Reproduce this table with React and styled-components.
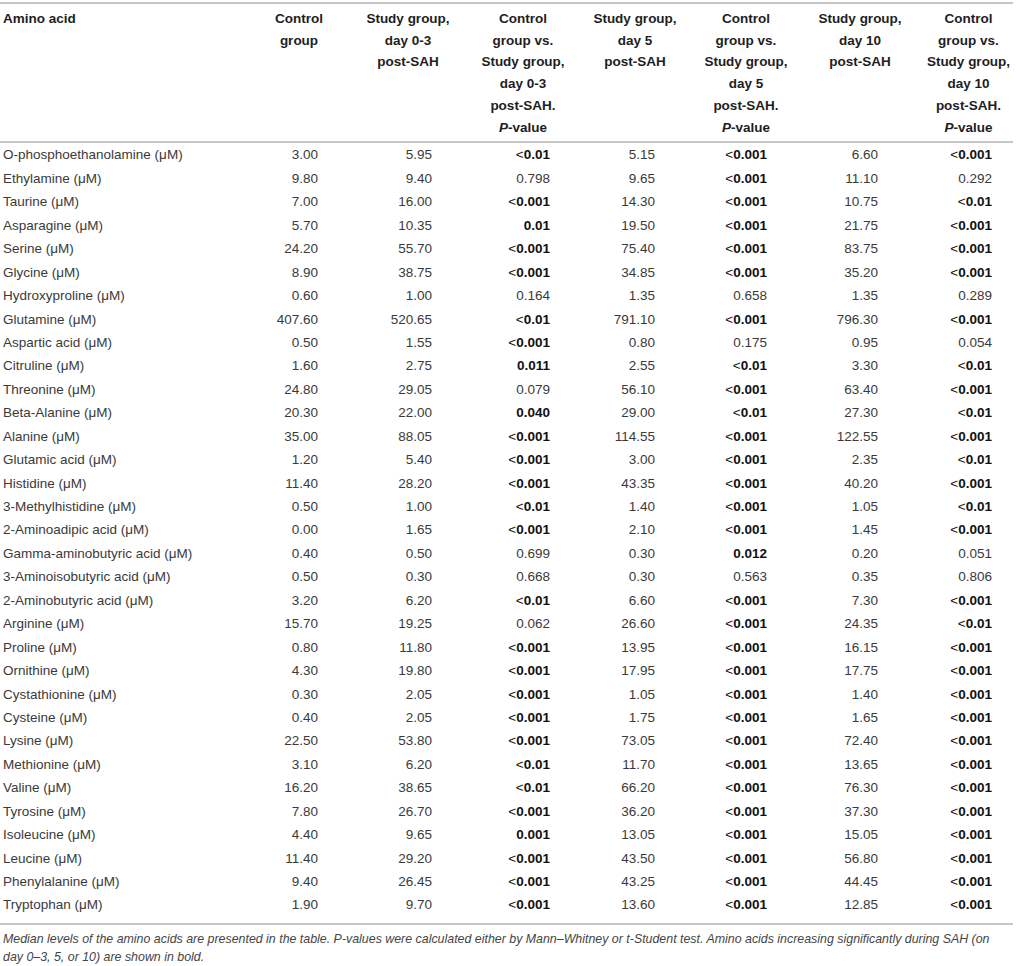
import React from "react";
import styled, { createGlobalStyle } from "styled-components";

const GlobalStyle = createGlobalStyle`
  html, body { margin: 0; padding: 0; background: #fff; }
  body { font-family: "Liberation Sans", Arial, sans-serif; }
`;

const COLS = "244px 110px 108px 122px 102px 120px 108px 99px";
const PAD_RIGHT = [0, 36, 30, 34, 31, 39, 36, 21];
const HEAD_SHIFT = [0, 0, 0, 0, 0, 0, 0, 10];

const Wrap = styled.div`
  width: 1013px;
  padding-top: 2px;
`;

const Table = styled.div`
  border-top: 2px solid #c6c6c6;
  border-bottom: 2px solid #c6c6c6;
`;

const HeadRow = styled.div`
  display: grid;
  grid-template-columns: ${COLS};
  border-bottom: 2px solid #c6c6c6;
  padding: 4px 0 3px;
  font-size: 13.5px;
  font-weight: bold;
  line-height: 21.7px;
  color: #1e1e1e;
`;

const HeadCell = styled.div`
  text-align: ${(p) => (p.$first ? "left" : "center")};
  padding-left: ${(p) => (p.$first ? 3 : p.$shift)}px;
`;

const Body = styled.div`
  padding: 0 0 6px;
`;

const Row = styled.div`
  display: grid;
  grid-template-columns: ${COLS};
  height: 23.44px;
  align-items: center;
  font-size: 13.5px;
  color: #3a3a3a;
`;

const NameCell = styled.div`
  padding-left: 3px;
  white-space: nowrap;
`;

const NumCell = styled.div`
  text-align: right;
  padding-right: ${(p) => p.$pad}px;
  white-space: nowrap;
  font-weight: ${(p) => (p.$bold ? "bold" : "normal")};
  color: ${(p) => (p.$bold ? "#111" : "#3a3a3a")};
`;

const Lt = styled.span`
  font-weight: normal;
`;

const Note = styled.p`
  margin: 0;
  padding: 5px 3px 0;
  font-size: 12.4px;
  line-height: 18px;
  font-style: italic;
  color: #454545;
`;

const headers = [
  ["Amino acid"],
  ["Control", "group"],
  ["Study group,", "day 0-3", "post-SAH"],
  ["Control", "group vs.", "Study group,", "day 0-3", "post-SAH.", "P"],
  ["Study group,", "day 5", "post-SAH"],
  ["Control", "group vs.", "Study group,", "day 5", "post-SAH.", "P"],
  ["Study group,", "day 10", "post-SAH"],
  ["Control", "group vs.", "Study group,", "day 10", "post-SAH.", "P"],
];

const data = [
  ["O-phosphoethanolamine", "3.00", "5.95", "<0.01", "5.15", "<0.001", "6.60", "<0.001"],
  ["Ethylamine", "9.80", "9.40", "0.798", "9.65", "<0.001", "11.10", "0.292"],
  ["Taurine", "7.00", "16.00", "<0.001", "14.30", "<0.001", "10.75", "<0.01"],
  ["Asparagine", "5.70", "10.35", "0.01", "19.50", "<0.001", "21.75", "<0.001"],
  ["Serine", "24.20", "55.70", "<0.001", "75.40", "<0.001", "83.75", "<0.001"],
  ["Glycine", "8.90", "38.75", "<0.001", "34.85", "<0.001", "35.20", "<0.001"],
  ["Hydroxyproline", "0.60", "1.00", "0.164", "1.35", "0.658", "1.35", "0.289"],
  ["Glutamine", "407.60", "520.65", "<0.01", "791.10", "<0.001", "796.30", "<0.001"],
  ["Aspartic acid", "0.50", "1.55", "<0.001", "0.80", "0.175", "0.95", "0.054"],
  ["Citruline", "1.60", "2.75", "0.011", "2.55", "<0.01", "3.30", "<0.01"],
  ["Threonine", "24.80", "29.05", "0.079", "56.10", "<0.001", "63.40", "<0.001"],
  ["Beta-Alanine", "20.30", "22.00", "0.040", "29.00", "<0.01", "27.30", "<0.01"],
  ["Alanine", "35.00", "88.05", "<0.001", "114.55", "<0.001", "122.55", "<0.001"],
  ["Glutamic acid", "1.20", "5.40", "<0.001", "3.00", "<0.001", "2.35", "<0.01"],
  ["Histidine", "11.40", "28.20", "<0.001", "43.35", "<0.001", "40.20", "<0.001"],
  ["3-Methylhistidine", "0.50", "1.00", "<0.01", "1.40", "<0.001", "1.05", "<0.01"],
  ["2-Aminoadipic acid", "0.00", "1.65", "<0.001", "2.10", "<0.001", "1.45", "<0.001"],
  ["Gamma-aminobutyric acid", "0.40", "0.50", "0.699", "0.30", "0.012", "0.20", "0.051"],
  ["3-Aminoisobutyric acid", "0.50", "0.30", "0.668", "0.30", "0.563", "0.35", "0.806"],
  ["2-Aminobutyric acid", "3.20", "6.20", "<0.01", "6.60", "<0.001", "7.30", "<0.001"],
  ["Arginine", "15.70", "19.25", "0.062", "26.60", "<0.001", "24.35", "<0.01"],
  ["Proline", "0.80", "11.80", "<0.001", "13.95", "<0.001", "16.15", "<0.001"],
  ["Ornithine", "4.30", "19.80", "<0.001", "17.95", "<0.001", "17.75", "<0.001"],
  ["Cystathionine", "0.30", "2.05", "<0.001", "1.05", "<0.001", "1.40", "<0.001"],
  ["Cysteine", "0.40", "2.05", "<0.001", "1.75", "<0.001", "1.65", "<0.001"],
  ["Lysine", "22.50", "53.80", "<0.001", "73.05", "<0.001", "72.40", "<0.001"],
  ["Methionine", "3.10", "6.20", "<0.01", "11.70", "<0.001", "13.65", "<0.001"],
  ["Valine", "16.20", "38.65", "<0.01", "66.20", "<0.001", "76.30", "<0.001"],
  ["Tyrosine", "7.80", "26.70", "<0.001", "36.20", "<0.001", "37.30", "<0.001"],
  ["Isoleucine", "4.40", "9.65", "0.001", "13.05", "<0.001", "15.05", "<0.001"],
  ["Leucine", "11.40", "29.20", "<0.001", "43.50", "<0.001", "56.80", "<0.001"],
  ["Phenylalanine", "9.40", "26.45", "<0.001", "43.25", "<0.001", "44.45", "<0.001"],
  ["Tryptophan", "1.90", "9.70", "<0.001", "13.60", "<0.001", "12.85", "<0.001"],
];

const isBold = (v) => v.startsWith("<") || parseFloat(v) < 0.05;

function PValue({ v }) {
  if (v.startsWith("<")) {
    return (
      <>
        <Lt>&lt;</Lt>
        {v.slice(1)}
      </>
    );
  }
  return v;
}

export default function App() {
  return (
    <Wrap>
      <GlobalStyle />
      <Table>
        <HeadRow>
          {headers.map((lines, i) => (
            <HeadCell key={i} $first={i === 0} $shift={HEAD_SHIFT[i]}>
              {lines.map((l, j) =>
                l === "P" ? (
                  <div key={j}>
                    <i>P</i>-value
                  </div>
                ) : (
                  <div key={j}>{l}</div>
                )
              )}
            </HeadCell>
          ))}
        </HeadRow>
        <Body>
          {data.map((r) => (
            <Row key={r[0]}>
              <NameCell>{r[0]} (μM)</NameCell>
              {r.slice(1).map((v, i) => {
                const col = i + 1;
                const isP = col >= 3 && col % 2 === 1;
                const bold = isP && isBold(v);
                return (
                  <NumCell key={col} $pad={PAD_RIGHT[col]} $bold={bold}>
                    {isP ? <PValue v={v} /> : v}
                  </NumCell>
                );
              })}
            </Row>
          ))}
        </Body>
      </Table>
      <Note>
        Median levels of the amino acids are presented in the table. P-values were calculated either by
        Mann–Whitney or t-Student test. Amino acids increasing significantly during SAH (on day 0–3, 5, or 10)
        are shown in bold.
      </Note>
    </Wrap>
  );
}
